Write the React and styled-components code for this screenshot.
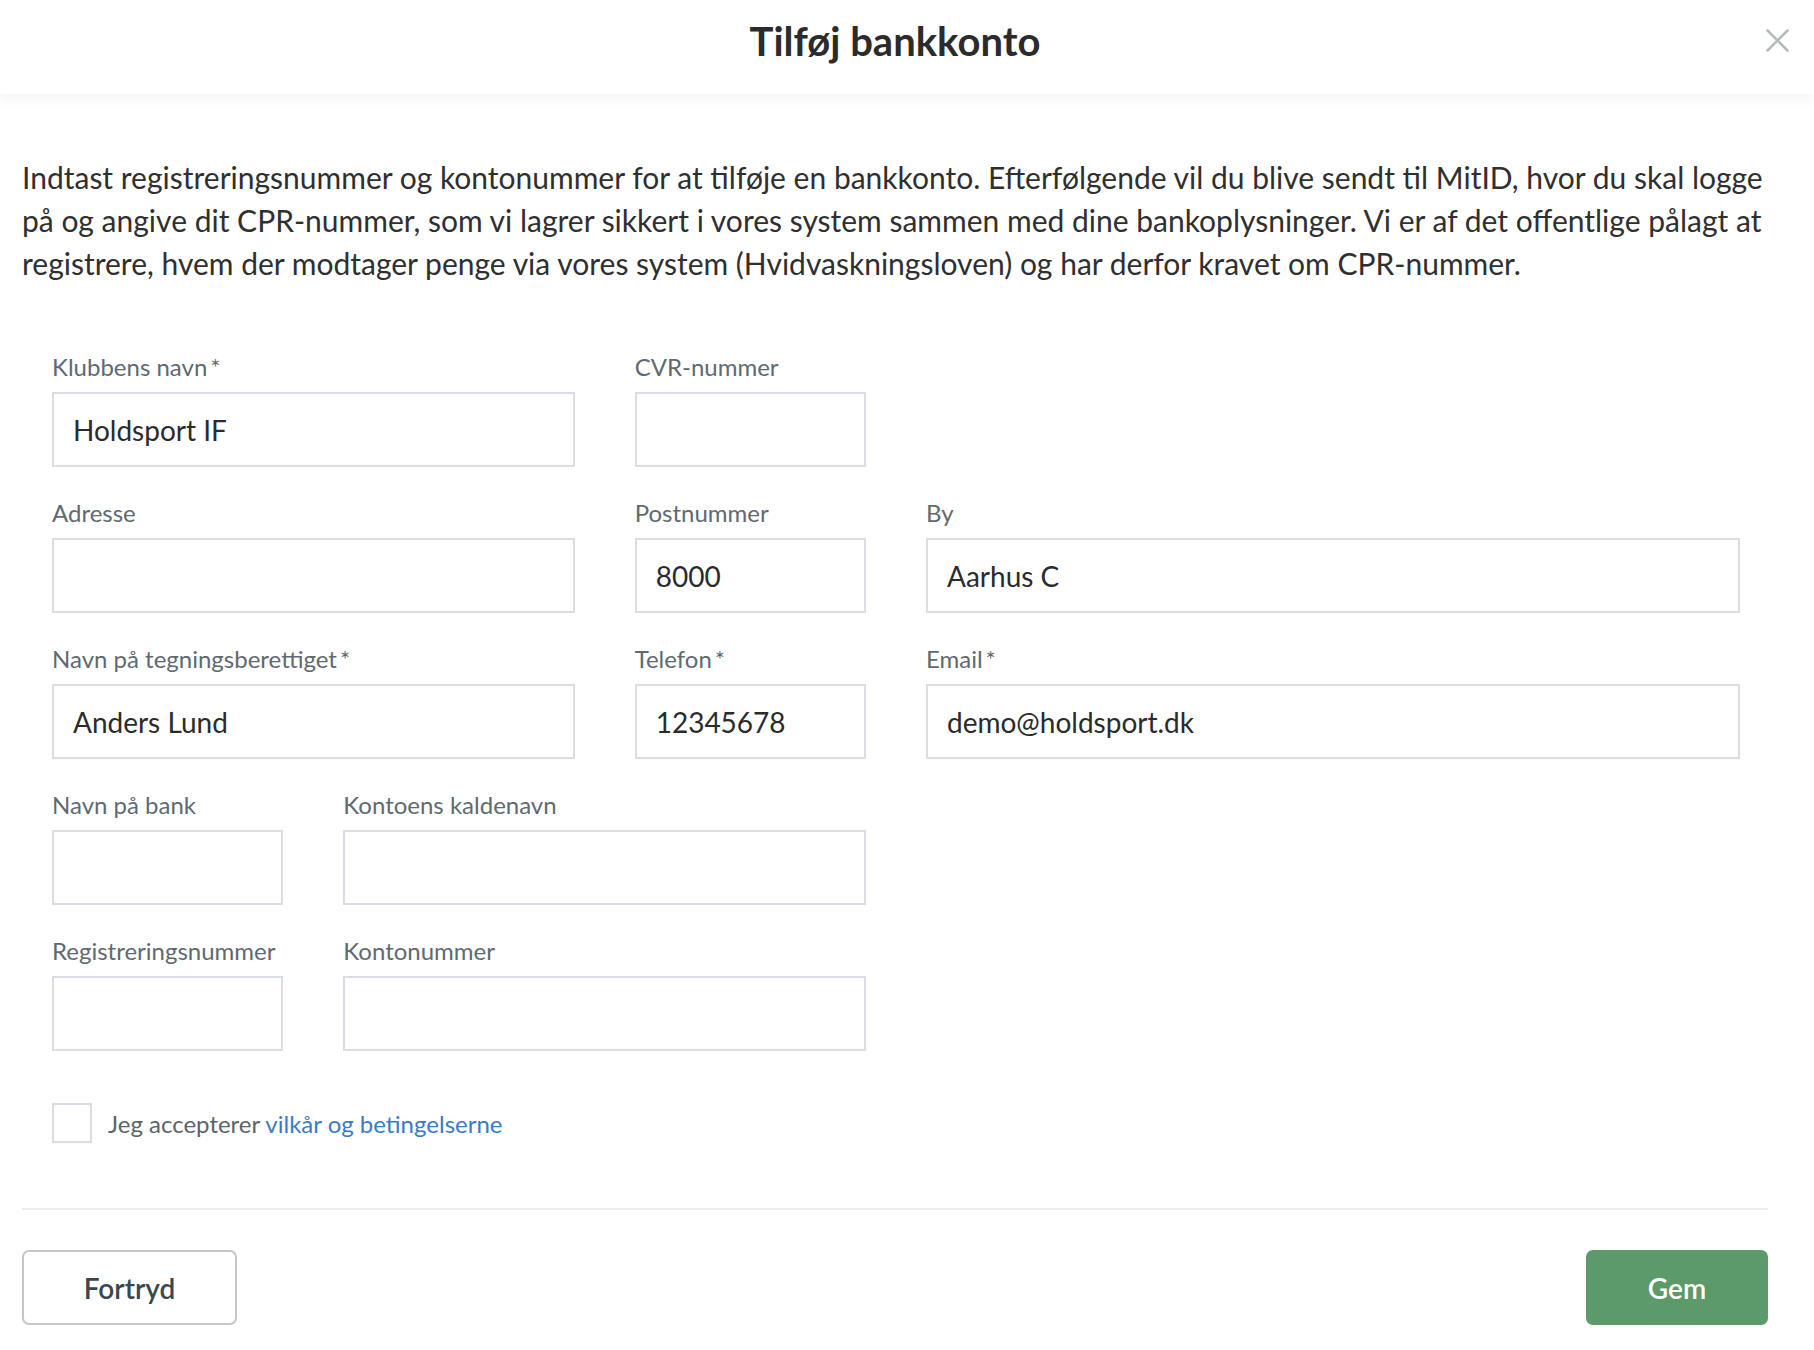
import React from "react";
import styled, { createGlobalStyle } from "styled-components";

const GlobalStyle = createGlobalStyle`
  body {
    margin: 0;
    background: #ffffff;
    font-family: Lato, "Noto Sans", sans-serif;
  }
`;

const Modal = styled.div`
  width: 1814px;
  min-height: 1350px;
  background: #ffffff;
  box-sizing: border-box;
`;

const Header = styled.header`
  position: relative;
  z-index: 1;
  height: 94px;
  padding: 17px 46px 0 22px;
  box-sizing: border-box;
  display: flex;
  justify-content: center;
  align-items: flex-start;
  background: #ffffff;
  box-shadow: 0 3px 14px rgba(60, 60, 110, 0.08);
`;

const Title = styled.h1`
  margin: 0;
  font-size: 40px;
  line-height: 48px;
  font-weight: 700;
  color: #2b2b2b;
`;

const CloseButton = styled.button`
  position: absolute;
  top: 29px;
  right: 25px;
  width: 23px;
  height: 23px;
  padding: 0;
  border: none;
  background: none;
  cursor: pointer;
`;

const Body = styled.div`
  padding: 62px 46px 0 22px;
`;

const Intro = styled.p`
  margin: 0;
  font-size: 30px;
  line-height: 43px;
  color: #2f2f2f;
`;

const Form = styled.div`
  margin-top: 67px;
  padding: 0 28px 0 30px;
  display: grid;
  grid-template-columns: repeat(6, 1fr);
  column-gap: 60px;
  row-gap: 31px;
`;

const Field = styled.div`
  grid-column: ${(p) => (p.$start ? `${p.$start} / ` : "")}span ${(p) => p.$span || 1};
  display: flex;
  flex-direction: column;
`;

const Label = styled.label`
  font-size: 24px;
  line-height: 30px;
  color: #5f6a70;
  margin-bottom: 10px;
  white-space: nowrap;
`;

const Star = styled.span`
  margin-left: 3px;
`;

const Input = styled.input`
  height: 75px;
  box-sizing: border-box;
  border: 2px solid #dadde6;
  border-radius: 0;
  padding: 0 19px;
  font-family: Lato, "Noto Sans", sans-serif;
  font-size: 28px;
  color: #2b2b2b;
  background: #ffffff;
  outline: none;
  width: 100%;
`;

const Terms = styled.div`
  margin: 52px 0 0 30px;
  display: flex;
  align-items: center;
  gap: 16px;
`;

const Checkbox = styled.span`
  width: 40px;
  height: 40px;
  box-sizing: border-box;
  border: 2px solid #dadde6;
  background: #ffffff;
`;

const TermsText = styled.span`
  font-size: 24px;
  color: #5b6469;
`;

const TermsLink = styled.a`
  color: #3a7bc6;
  text-decoration: none;
`;

const Divider = styled.hr`
  margin: 65px 0 0;
  border: none;
  height: 2px;
  background: #ececf1;
`;

const Footer = styled.div`
  margin-top: 40px;
  display: flex;
  justify-content: space-between;
`;

const Button = styled.button`
  height: 75px;
  width: ${(p) => p.$width}px;
  box-sizing: border-box;
  border-radius: 7px;
  font-family: Lato, "Noto Sans", sans-serif;
  font-size: 28px;
  font-weight: 600;
  cursor: pointer;
  border: 2px solid ${(p) => (p.$primary ? "#5c9a6a" : "#c3c7ca")};
  background: ${(p) => (p.$primary ? "#5c9a6a" : "#ffffff")};
  color: ${(p) => (p.$primary ? "#ffffff" : "#3b474e")};
`;

const fields = [
  { label: "Klubbens navn", req: true, span: 2, value: "Holdsport IF" },
  { label: "CVR-nummer", span: 1 },
  { label: "Adresse", span: 2, start: 1 },
  { label: "Postnummer", span: 1, value: "8000" },
  { label: "By", span: 3, value: "Aarhus C" },
  { label: "Navn på tegningsberettiget", req: true, span: 2, value: "Anders Lund" },
  { label: "Telefon", req: true, span: 1, value: "12345678" },
  { label: "Email", req: true, span: 3, value: "demo@holdsport.dk" },
  { label: "Navn på bank", span: 1, start: 1 },
  { label: "Kontoens kaldenavn", span: 2 },
  { label: "Registreringsnummer", span: 1, start: 1 },
  { label: "Kontonummer", span: 2 },
];

const App = () => {
  return (
    <>
      <GlobalStyle />
      <Modal>
        <Header>
          <Title>Tilføj bankkonto</Title>
          <CloseButton aria-label="Luk">
            <svg width="23" height="23" viewBox="0 0 23 23">
              <path
                d="M1.5 1.5 L21.5 21.5 M21.5 1.5 L1.5 21.5"
                stroke="#b5babd"
                strokeWidth="2.6"
                strokeLinecap="round"
              />
            </svg>
          </CloseButton>
        </Header>
        <Body>
          <Intro>
            Indtast registreringsnummer og kontonummer for at tilføje en bankkonto. Efterfølgende vil du blive
            sendt til MitID, hvor du skal logge på og angive dit CPR-nummer, som vi lagrer sikkert i vores system
            sammen med dine bankoplysninger. Vi er af det offentlige pålagt at registrere, hvem der modtager penge
            via vores system (Hvidvaskningsloven) og har derfor kravet om CPR-nummer.
          </Intro>
          <Form>
            {fields.map((f) => (
              <Field key={f.label} $span={f.span} $start={f.start}>
                <Label>
                  {f.label}
                  {f.req && <Star>*</Star>}
                </Label>
                <Input defaultValue={f.value || ""} />
              </Field>
            ))}
          </Form>
          <Terms>
            <Checkbox />
            <TermsText>
              Jeg accepterer <TermsLink href="#">vilkår og betingelserne</TermsLink>
            </TermsText>
          </Terms>
          <Divider />
          <Footer>
            <Button $width={215}>Fortryd</Button>
            <Button $primary $width={182}>Gem</Button>
          </Footer>
        </Body>
      </Modal>
    </>
  );
};

export default App;
